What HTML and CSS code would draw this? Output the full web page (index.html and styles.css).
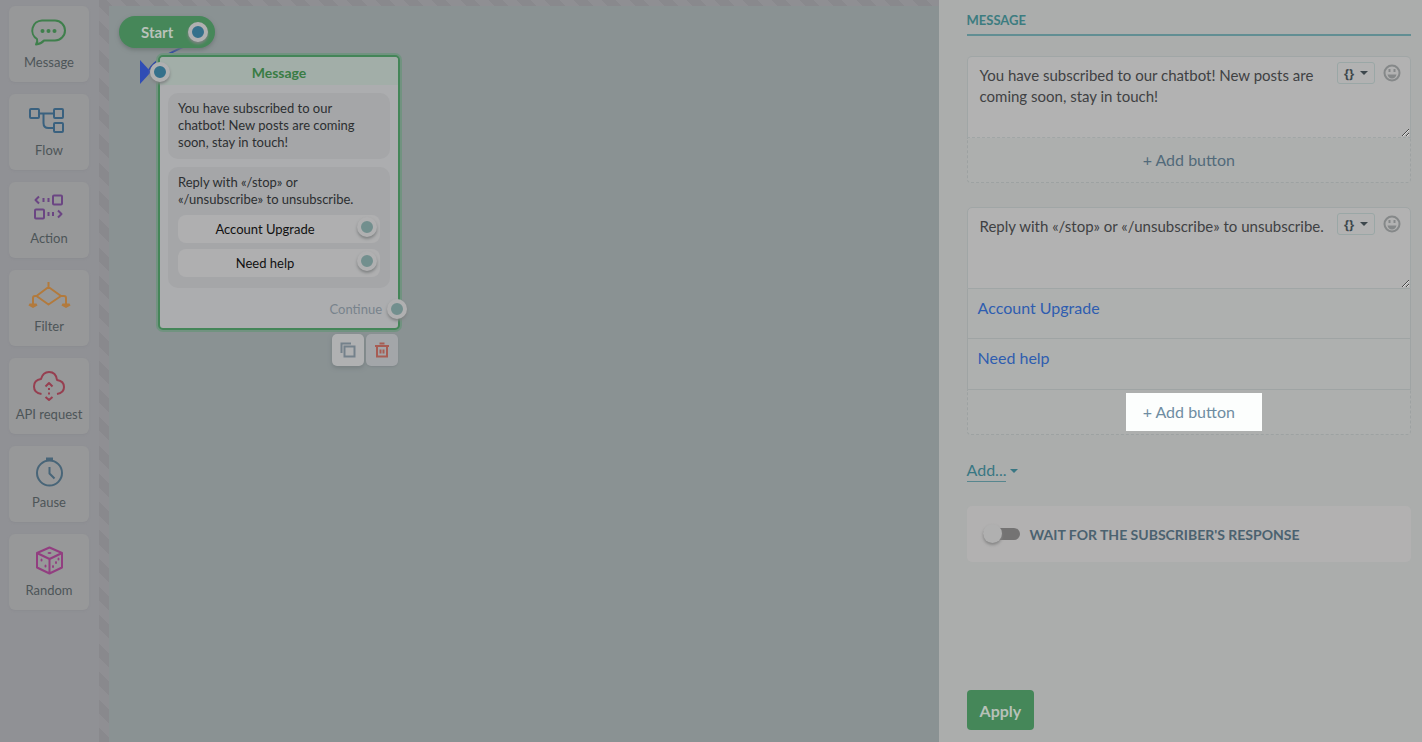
FILE: index.html
```html
<!DOCTYPE html>
<html lang="en">
<head>
<meta charset="utf-8">
<title>Chatbot flow editor</title>
<link rel="stylesheet" href="styles.css">
</head>
<body>
<div class="app">
  <nav class="sidebar" aria-label="Blocks">
    <button class="tool tool-message">
      <svg width="40" height="34" viewBox="0 0 40 34"><path d="M13 5.500h13a9.500 9.500 0 0 1 0 20H15q-3 3.500-8 4 2-3 1-5.500A10 10 0 0 1 13 5.500z"/><g class="solid"><circle cx="13.500" cy="16" r="2"/><circle cx="19.500" cy="16" r="2"/><circle cx="25.500" cy="16" r="2"/></g></svg>
      <span>Message</span>
    </button>
    <button class="tool tool-flow">
      <svg width="40" height="34" viewBox="0 0 40 34"><rect x="1" y="6" width="9" height="9" rx="1"/><rect x="25" y="6" width="9" height="9" rx="1"/><rect x="25" y="20" width="9" height="9" rx="1"/><path d="M10 10.500h15M14.500 10.500V20q0 5 5 5H25"/></svg>
      <span>Flow</span>
    </button>
    <button class="tool tool-action">
      <svg width="40" height="34" viewBox="0 0 40 34"><rect x="24" y="4.500" width="9" height="9" rx="1"/><rect x="6" y="18.500" width="9" height="9" rx="1"/><path d="M10 5.500L6.500 9l3.500 3.500M14.500 7v4M19.500 7v4M19.500 21v4M24 21v4M29 19.500l3.500 3.500-3.500 3.500"/></svg>
      <span>Action</span>
    </button>
    <button class="tool tool-filter">
      <svg width="40" height="34" viewBox="0 0 40 34"><path d="M19.500 3v5L32 17l-12.500 8.500L7.500 17l12-9M7.500 17H6q-2 0-2 2v7M32 17h3q2 0 2 2v7"/><path class="solid" d="M.5 24.500h7l1 2L4 29l-4.500-2.500zM33.500 24.500h7l1 2L37 29l-4.500-2.500z"/></svg>
      <span>Filter</span>
    </button>
    <button class="tool tool-api">
      <svg width="40" height="34" viewBox="0 0 40 34"><path d="M12.500 27Q5 26 5 19.500 5 13 12 12q2-7 8-7 7 0 8 8 7 1 7 7 0 6-7 7M16.500 19.500l3.500-3.500 3.500 3.500M20 21v2M20 25.500v2M16.500 30l3.500 3 3.500-3"/></svg>
      <span>API request</span>
    </button>
    <button class="tool tool-pause">
      <svg width="40" height="34" viewBox="0 0 40 34"><circle cx="20.500" cy="18" r="12.500"/><path d="M20.500 12v6.500l5 5"/><path class="solid" d="M17 2.500h7v3h-7z"/></svg>
      <span>Pause</span>
    </button>
    <button class="tool tool-random">
      <svg width="40" height="34" viewBox="0 0 40 34"><path d="M20.500 4.500L33 10v14.500L20.500 30.500 8 24.500V10zM8 10l12.500 6L33 10M20.500 16v14.500"/><g class="solid"><ellipse cx="20.500" cy="10" rx="2" ry="1"/><ellipse cx="12.500" cy="17" rx="1" ry="1.500"/><ellipse cx="16.500" cy="23" rx="1" ry="1.500"/><ellipse cx="24" cy="23.500" rx="1" ry="1.500"/><ellipse cx="27" cy="19.500" rx="1" ry="1.500"/><ellipse cx="29.500" cy="16" rx="1" ry="1.500"/></g></svg>
      <span>Random</span>
    </button>
  </nav>

  <main class="stage">
    <div class="canvas">
      <svg class="link" width="100" height="60" viewBox="0 0 100 60"><path class="wire" d="M80 4C62 13 46 19 40 30"/><path class="arrow" d="M31 20v24l11-12z"/></svg>
      <div class="start">Start<i class="port port-live"></i></div>
      <section class="node">
        <i class="port port-live port-in"></i>
        <h2 class="node-title">Message</h2>
        <div class="node-body">
          <p class="bubble">You have subscribed to our<br>chatbot! New posts are coming<br>soon, stay in touch!</p>
          <div class="bubble">
            <p>Reply with «/stop» or<br>«/unsubscribe» to unsubscribe.</p>
            <div class="reply"><span>Account Upgrade</span><i class="port"></i></div>
            <div class="reply"><span>Need help</span><i class="port"></i></div>
          </div>
        </div>
        <div class="continue">Continue</div>
        <i class="port port-out"></i>
      </section>
      <div class="node-tools">
        <button class="node-tool" aria-label="Copy"><svg width="16" height="16" viewBox="0 0 16 16"><path d="M1.500 11V1.500H11M4.500 4.500h10v10h-10z"/></svg></button>
        <button class="node-tool node-tool-delete" aria-label="Delete"><svg width="16" height="16" viewBox="0 0 16 16"><path d="M5.500 1.500h5M1 4h14M3 4v10.500h10V4M6.500 7.500v4M9.500 7.500v4"/></svg></button>
      </div>
    </div>
  </main>

  <aside class="panel">
    <h1 class="panel-title">MESSAGE</h1>
    <div class="editor">
      <div class="field">
        <textarea class="text" aria-label="Message text">You have subscribed to our chatbot! New posts are coming soon, stay in touch!</textarea>
        <div class="field-tools">
          <button class="vars" aria-label="Variables"><b>{}</b><i class="caret"></i></button>
          <button class="emoji" aria-label="Emoji"><svg width="18" height="18" viewBox="0 0 18 18"><circle cx="9" cy="9" r="7.500"/><path d="M6.500 5v3M11.500 5v3"/><path class="mouth" d="M4.500 10.500h9q-1 4-4.500 4t-4.500-4z"/></svg></button>
        </div>
      </div>
      <div class="add-row"><button class="add-button">+ Add button</button></div>
    </div>
    <div class="editor editor-rows">
      <div class="field">
        <textarea class="text" aria-label="Reply text">Reply with «/stop» or «/unsubscribe» to unsubscribe.</textarea>
        <div class="field-tools">
          <button class="vars" aria-label="Variables"><b>{}</b><i class="caret"></i></button>
          <button class="emoji" aria-label="Emoji"><svg width="18" height="18" viewBox="0 0 18 18"><circle cx="9" cy="9" r="7.500"/><path d="M6.500 5v3M11.500 5v3"/><path class="mouth" d="M4.500 10.500h9q-1 4-4.500 4t-4.500-4z"/></svg></button>
        </div>
      </div>
      <a class="row" href="#">Account Upgrade</a>
      <a class="row" href="#">Need help</a>
      <div class="add-row"><button class="add-button spotlight">+ Add button</button></div>
    </div>
    <button class="add-menu"><span>Add...</span><i class="caret"></i></button>
    <label class="wait"><input type="checkbox" class="switch">WAIT FOR THE SUBSCRIBER'S RESPONSE</label>
    <button class="apply">Apply</button>
  </aside>
</div>
</body>
</html>
```
FILE: styles.css
```css
* { box-sizing: border-box; }
body { margin: 0; font-family: Lato, "Open Sans", sans-serif; font-size: 16px; color: #3b3e40; }
button { font: inherit; color: inherit; border: 0; background: none; padding: 0; }
h1, h2, p { margin: 0; }
svg { fill: none; stroke: currentColor; stroke-width: 2; overflow: visible; }
.solid { fill: currentColor; stroke: none; }

.app { display: flex; min-height: 100vh; }

.sidebar { flex: none; width: 99px; padding: 6px 10px 6px 9px; background: #909195; display: flex; flex-direction: column; gap: 12px; }
.tool { height: 76px; padding-top: 9px; border-radius: 6px; background: #979899; box-shadow: 0 1px 2px #8b8c90; display: flex; flex-direction: column; align-items: center; gap: 4px; font-size: 13px; line-height: 18px; }
.tool span { color: #4d5558; }
.tool svg { stroke-linejoin: round; }
.tool-message { color: #3f7f4c; }
.tool-flow { color: #3a617f; }
.tool-action { color: #6b4583; }
.tool-filter { color: #b27a3d; }
.tool-api { color: #963f50; }
.tool-pause { color: #486578; }
.tool-random { color: #923e80; }

.stage { flex: 1; min-width: 0; padding: 6px 0 0 10px; display: flex; background: repeating-linear-gradient(45deg, #89898d 0 10px, #8f8f93 10px 20px); }
.canvas { flex: 1; position: relative; background: #8a9293; }
.link { position: absolute; left: 0; top: 34px; }
.wire { stroke: #304aa5; }
.arrow { fill: #304db5; stroke: none; }
.start { position: absolute; left: 10px; top: 10px; width: 96px; height: 32px; padding: 0 7px 0 22px; border-radius: 16px; background: #468759; box-shadow: 0 2px 4px #6f7878; color: #b9c2ba; font-weight: 700; font-size: 15px; line-height: 30px; display: flex; align-items: center; justify-content: space-between; }

.port { flex: none; width: 20px; height: 20px; border: 4px solid #b0b0b1; border-radius: 50%; background: #728f8e; box-shadow: 0 2px 3px #7f8283; }
.port-live { background: #34708b; }
.port-in { position: absolute; left: -10px; top: 5px; }
.port-out { position: absolute; right: -9px; bottom: 9px; }

.node { position: absolute; left: 49px; top: 49px; width: 242px; border: 2px solid #448558; border-radius: 5px; background: #acadaf; box-shadow: 0 0 0 2px #719380; }
.node-title { height: 28px; border-radius: 4px 4px 0 0; background: #a2aea8; color: #397c44; font-size: 14px; line-height: 31px; text-align: center; }
.node-body { padding: 8px; display: flex; flex-direction: column; gap: 8px; }
.bubble { padding: 7px 10px 8px; border-radius: 10px; background: #a5a6a8; color: #2c2f31; font-size: 13px; line-height: 17px; }
.reply { position: relative; height: 28px; margin-top: 6px; border-radius: 8px; background: #afafb0; color: #111; font-size: 13px; line-height: 28px; padding-right: 28px; text-align: center; }
.bubble p + .reply { margin-top: 7px; }
.bubble .reply:last-child { margin-bottom: 3px; }
.reply .port { position: absolute; right: 3px; top: 2px; }
.continue { padding: 3px 16px 9px; text-align: right; color: #78838c; font-size: 13px; line-height: 20px; }
.node-tools { position: absolute; left: 223px; top: 328px; display: flex; gap: 2px; }
.node-tool { width: 32px; height: 32px; border-radius: 5px; background: #b0b1b2; box-shadow: 0 2px 4px #767e80; color: #74818b; display: grid; place-items: center; }
.node-tool-delete { background: #a3a6a9; color: #a75c53; box-shadow: 0 1px 2px #7e8688; }

.panel { flex: 0 0 34%; min-height: 100vh; padding: 10px 11px 12px 28px; background: #abadac; display: flex; flex-direction: column; align-items: stretch; }
.panel-title { padding-bottom: 4px; border-bottom: 2px solid #618e93; color: #3c7c80; font-size: 13px; line-height: 20px; }
.editor { margin-top: 20px; }
.editor-rows { margin-top: 24px; }
.field { position: relative; }
.text { display: block; width: 100%; height: 82px; padding: 8px 80px 8px 12px; border: 1px solid #a0a6a6; border-bottom-style: dashed; border-radius: 5px 5px 0 0; background: #b2b2b2; color: #3f4143; font: inherit; font-size: 15px; line-height: 21px; resize: vertical; overflow: hidden; outline: none; }
.editor-rows .text { border-bottom-style: solid; }
.field-tools { position: absolute; top: 6px; right: 10px; display: flex; align-items: center; gap: 8px; }
.vars { width: 38px; height: 22px; border: 1px solid #9aa7a6; border-radius: 3px; display: flex; align-items: center; justify-content: center; gap: 6px; font-family: "Open Sans", sans-serif; font-size: 13px; line-height: 18px; color: #3d474c; }
.caret { border: 4px solid transparent; border-top-color: currentColor; border-bottom: 0; }
.emoji { height: 18px; color: #858889; }
.mouth { fill: currentColor; stroke: none; }
.row { display: block; height: 50px; padding: 8px 10px; border: 1px solid #9fa4a4; border-top: 0; background: #aeb0af; color: #2e5db0; line-height: 22px; text-decoration: none; }
.row + .row { height: 51px; }
.add-row { height: 45px; border: 1px dashed #9da2a2; border-top: 0; border-radius: 0 0 4px 4px; background: #adafae; display: flex; align-items: center; justify-content: center; }
.add-button { position: relative; color: #526a7a; line-height: 38px; }
.spotlight { z-index: 0; color: #6f8da2; }
.spotlight::before { content: ""; position: absolute; inset: 0 -27px 0 -17px; background: #fcfefd; z-index: -1; }
.add-menu { align-self: flex-start; margin-top: 24px; display: flex; align-items: center; gap: 4px; color: #397783; line-height: 22px; }
.add-menu span { border-bottom: 1px solid #57868e; }
.wait { margin-top: 24px; height: 56px; padding: 0 16px; border-radius: 5px; background: #b2b1b1; display: flex; align-items: center; gap: 10px; color: #4b6270; font-weight: 700; font-size: 14px; }
.switch { appearance: none; position: relative; width: 37px; height: 12px; margin: 0; border-radius: 6px; background: #747373; }
.switch::before { content: ""; position: absolute; left: 0; top: -4px; width: 19px; height: 19px; border-radius: 50%; background: #b0b0b0; box-shadow: 0 2px 3px #858585; }
.apply { align-self: flex-start; margin-top: auto; height: 40px; padding: 0 13px; border-radius: 4px; background: #458759; color: #b7c1b8; font-weight: 700; }
```
